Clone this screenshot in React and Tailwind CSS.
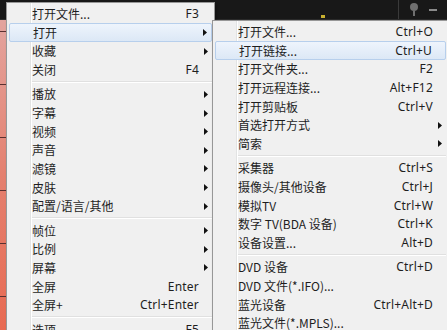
import React from 'react';

const mainItems = [
  { label: '打开文件...', keys: 'F3' },
  { label: '打开', sub: true, active: true },
  { label: '收藏', sub: true },
  { label: '关闭', keys: 'F4' },
  'sep',
  { label: '播放', sub: true },
  { label: '字幕', sub: true },
  { label: '视频', sub: true },
  { label: '声音', sub: true },
  { label: '滤镜', sub: true },
  { label: '皮肤', sub: true },
  { label: '配置/语言/其他', sub: true },
  'sep',
  { label: '帧位', sub: true },
  { label: '比例', sub: true },
  { label: '屏幕', sub: true },
  { label: '全屏', keys: 'Enter' },
  { label: '全屏+', keys: 'Ctrl+Enter' },
  'sep',
  { label: '选项', keys: 'F5' },
];

const openItems = [
  { label: '打开文件...', keys: 'Ctrl+O' },
  { label: '打开链接...', keys: 'Ctrl+U', active: true },
  { label: '打开文件夹...', keys: 'F2' },
  { label: '打开远程连接...', keys: 'Alt+F12' },
  { label: '打开剪贴板', keys: 'Ctrl+V' },
  { label: '首选打开方式', sub: true },
  { label: '简索', sub: true },
  'sep',
  { label: '采集器', keys: 'Ctrl+S' },
  { label: '摄像头/其他设备', keys: 'Ctrl+J' },
  { label: '模拟TV', keys: 'Ctrl+W' },
  { label: '数字 TV(BDA 设备)', keys: 'Ctrl+K' },
  { label: '设备设置...', keys: 'Alt+D' },
  'sep',
  { label: 'DVD 设备', keys: 'Ctrl+D' },
  { label: 'DVD 文件(*.IFO)...' },
  { label: '蓝光设备', keys: 'Ctrl+Alt+D' },
  { label: '蓝光文件(*.MPLS)...' },
];

const cjk = "font-['Noto_Sans_CJK_SC','Noto_Sans',sans-serif]";

function Arrow() {
  return (
    <svg width="4" height="7" viewBox="0 0 4 7" className="ml-[5px]">
      <path d="M0 0 L4 3.5 L0 7 Z" fill="#111" />
    </svg>
  );
}

function MenuList({ items }) {
  return (
    <div className="relative pt-[1.7px]">
      {/* icon gutter */}
      <div className="absolute left-[23px] top-0 bottom-0 w-px bg-[#e2e3e3]" />
      <div className="absolute left-[24px] top-0 bottom-0 w-px bg-white" />
      {items.map((it, i) =>
        it === 'sep' ? (
          <div key={i} className="h-[5.8px] flex flex-col justify-center ml-[25px] mr-[2px]">
            <div className="h-px bg-[#e0e0e0]" />
            <div className="h-px bg-white" />
          </div>
        ) : (
          <div
            key={i}
            className={
              'relative mx-[2px] h-[18.65px] flex items-center pl-[23px] text-[12px] leading-none text-[#1e1e1e] ' +
              cjk +
              (it.active
                ? ' rounded-[2px] border border-[#b7cfec] bg-gradient-to-b from-[#eef4fc] to-[#dce8f6] pl-[22px]'
                : '')
            }
          >
            <span className="flex-1 whitespace-nowrap">{it.label}</span>
            <span className="whitespace-nowrap font-['Noto_Sans',sans-serif] text-[12px] tracking-[0.2px]">
              {it.keys}
            </span>
            <span className="w-[13px] flex items-center">{it.sub && <Arrow />}</span>
          </div>
        )
      )}
    </div>
  );
}

export default function App() {
  const ticks = [33, 88, 142, 195, 248, 302];
  return (
    <div className="relative w-[447px] h-[330px] overflow-hidden bg-[#161616] flex flex-col">
      {/* player title bar */}
      <div className="h-[20px] shrink-0 flex items-stretch border-b border-[#2b2b2b] bg-[#181818]">
        <div className="w-[321px]" />
        <div className="w-[4px] h-[3px] self-end mb-[1px] bg-[#c8b030]" />
        <div className="w-[73px]" />
        <div className="w-px bg-[#3a3a3a]" />
        <div className="w-[30px] flex flex-col items-center pt-[3px]">
          <div className="w-[8px] h-[8px] rounded-full bg-[#6f6f6f]" />
          <div className="w-[2px] h-[5px] bg-[#6f6f6f]" />
        </div>
        <div className="flex items-center">
          <div className="w-[8px] h-[2px] bg-[#8a8a8a]" />
        </div>
      </div>
      {/* video area */}
      <div className="flex-1 flex">
        <div className="w-[8px] flex flex-col bg-gradient-to-b from-[#e3a49e] via-[#e4806f] to-[#e86a52]">
          {ticks.map((t, i) => (
            <div key={t} className={(i === 0 ? 'mt-[11px]' : 'mt-[52px]') + ' h-px bg-[#5a3030]'} />
          ))}
        </div>
      </div>

      <div className="absolute left-[6px] top-[2px] w-[209px] h-[340px] bg-[#f0f0f0] border border-[#979797] shadow-[2px_2px_3px_rgba(0,0,0,0.3)]">
        <MenuList items={mainItems} />
      </div>

      <div className="absolute left-[212px] top-[20px] w-[237px] h-[320px] bg-[#f0f0f0] border border-[#979797] shadow-[2px_2px_3px_rgba(0,0,0,0.3)]">
        <MenuList items={openItems} />
      </div>
    </div>
  );
}
